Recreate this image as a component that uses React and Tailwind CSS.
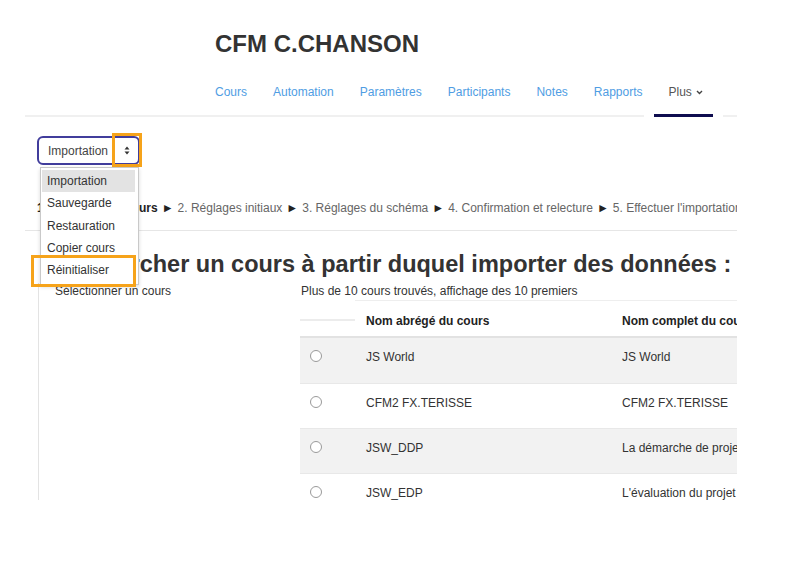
import React from "react";

const navItems = ["Cours", "Automation", "Paramètres", "Participants", "Notes", "Rapports"];
const rows = [
  ["JS World", "JS World"],
  ["CFM2 FX.TERISSE", "CFM2 FX.TERISSE"],
  ["JSW_DDP", "La démarche de projet pédagogique"],
  ["JSW_EDP", "L'évaluation du projet pédagogique"],
];

function Sep() {
  return <span className="mx-[4px] text-[#222]">►</span>;
}

export default function App() {
  return (
    <div className="w-[785px] h-[561px] bg-white overflow-hidden font-['Liberation_Sans',Arial,sans-serif]">
      <div className="ml-[25px] w-[712px] h-[500px] overflow-hidden">
        {/* Header */}
        <div className="pt-[30px] pl-[190px] text-[24px] leading-[28px] font-bold text-[#333]">
          CFM C.CHANSON
        </div>
        <nav className="mt-[18px] flex pl-[177px] text-[12px] leading-4">
          {navItems.map((t) => (
            <span key={t} className="px-[13px] pt-2 pb-[14px] text-[#4f9de3] whitespace-nowrap">
              {t}
            </span>
          ))}
          <span className="px-[13px] pt-2 pb-[14px] text-[#555] flex items-start gap-[4px]">
            Plus
            <svg width="7" height="5" viewBox="0 0 7 5" className="mt-[6px]">
              <path d="M1 1 L3.5 3.5 L6 1" fill="none" stroke="#444" strokeWidth="1.4" />
            </svg>
          </span>
        </nav>
        <div className="flex h-[3px] items-end">
          <div className="flex-1 h-[2px] bg-[#f0f0f0]" />
          <div className="w-[10px]" />
          <div className="w-[59px] h-[3px] bg-[#0f0d4f]" />
          <div className="w-[10px]" />
          <div className="w-[14px] h-[2px] bg-[#f0f0f0]" />
        </div>

        {/* Select with open list */}
        <div className="mt-[19px] ml-[12px] relative w-[103px] h-[29px] z-10">
          <div className="w-full h-full border-2 border-[#413d9c] rounded-[6px] flex items-center pl-[9px] pr-[8px] justify-between text-[12px] text-[#444]">
            <span>Importation</span>
            <svg width="6" height="9" viewBox="0 0 6 9">
              <path d="M3 0.5 L5.5 3.5 L0.5 3.5 Z" fill="#333" />
              <path d="M3 8.5 L5.5 5.5 L0.5 5.5 Z" fill="#333" />
            </svg>
          </div>
          <div className="absolute left-[75px] top-[-3px] w-[30px] h-[34px] border-[3px] border-[#f6a31a]" />
          <div className="absolute left-[3px] top-[31px] w-[99px] h-[118px] bg-white border border-[#c9c9c9] shadow-[0_2px_4px_rgba(0,0,0,0.15)] pt-[2px] text-[12px] text-[#333]">
            <div className="ml-[1px] mr-[3px] h-[22.25px] leading-[22.25px] pl-[5px] bg-[#e3e3e3]">Importation</div>
            <div className="h-[22.25px] leading-[22.25px] pl-[6px]">Sauvegarde</div>
            <div className="h-[22.25px] leading-[22.25px] pl-[6px]">Restauration</div>
            <div className="h-[22.25px] leading-[22.25px] pl-[6px]">Copier cours</div>
            <div className="h-[22.25px] leading-[22.25px] pl-[6px]">Réinitialiser</div>
          </div>
          <div className="absolute left-[-6px] top-[119px] w-[105px] h-[32px] border-[3px] border-[#f6a31a]" />
        </div>

        {/* Breadcrumb */}
        <div className="mt-[35px] ml-[12px] text-[12px] leading-4 text-[#666] whitespace-nowrap">
          <b className="text-[#222]">1. Sélection du cours</b>
          <Sep />2. Réglages initiaux<Sep />3. Réglages du schéma<Sep />4. Confirmation et relecture
          <Sep />5. Effectuer l'importation<Sep />6. Terminer
        </div>
        <div className="mt-[14px] h-px bg-[#e6e6e6]" />

        {/* Heading */}
        <h2 className="mt-[19px] pl-[35px] text-[23.5px] leading-[28px] font-bold text-[#333] whitespace-nowrap">
          Rechercher un cours à partir duquel importer des données :
        </h2>

        {/* Content */}
        <div className="mt-[5px] flex h-[230px]">
          <div className="ml-[13px] w-[262px] shrink-0 border-l border-[#e3e3e3] pl-[16px] text-[12px] leading-4 text-[#333]">
            Sélectionner un cours
          </div>
          <div className="flex-1 min-w-0">
            <div className="pl-[1px] text-[12px] leading-4 text-[#333] whitespace-nowrap">
              Plus de 10 cours trouvés, affichage des 10 premiers
            </div>
            <div className="mt-[1px] w-[700px] text-[12px] leading-4 text-[#333]">
              <div className="flex h-[38px] border-b-2 border-[#e2e2e2]">
                <div className="w-[55px] flex items-center">
                  <div className="w-full h-[2px] bg-[#ececec] mt-[3px]" />
                </div>
                <div className="w-[256px] border-t border-[#eeeeee] pl-[11px] pt-[12px] font-bold text-[#222]">
                  Nom abrégé du cours
                </div>
                <div className="flex-1 border-t border-[#eeeeee] pl-[11px] pt-[12px] font-bold text-[#222] whitespace-nowrap">
                  Nom complet du cours
                </div>
              </div>
              {rows.map((r, i) => (
                <div
                  key={i}
                  className={`flex h-[45px] ${i > 0 ? "border-t border-[#e8e8e8]" : ""} ${
                    i % 2 === 0 ? "bg-[#f2f2f2]" : "bg-white"
                  }`}
                >
                  <div className="w-[55px] pl-[10px] pt-[12px]">
                    <div className="w-[12px] h-[12px] rounded-full border border-[#9a9a9a] bg-white" />
                  </div>
                  <div className="w-[256px] pl-[11px] pt-[11px] whitespace-nowrap">{r[0]}</div>
                  <div className="flex-1 pl-[11px] pt-[11px] whitespace-nowrap">{r[1]}</div>
                </div>
              ))}
            </div>
          </div>
        </div>
      </div>
    </div>
  );
}
